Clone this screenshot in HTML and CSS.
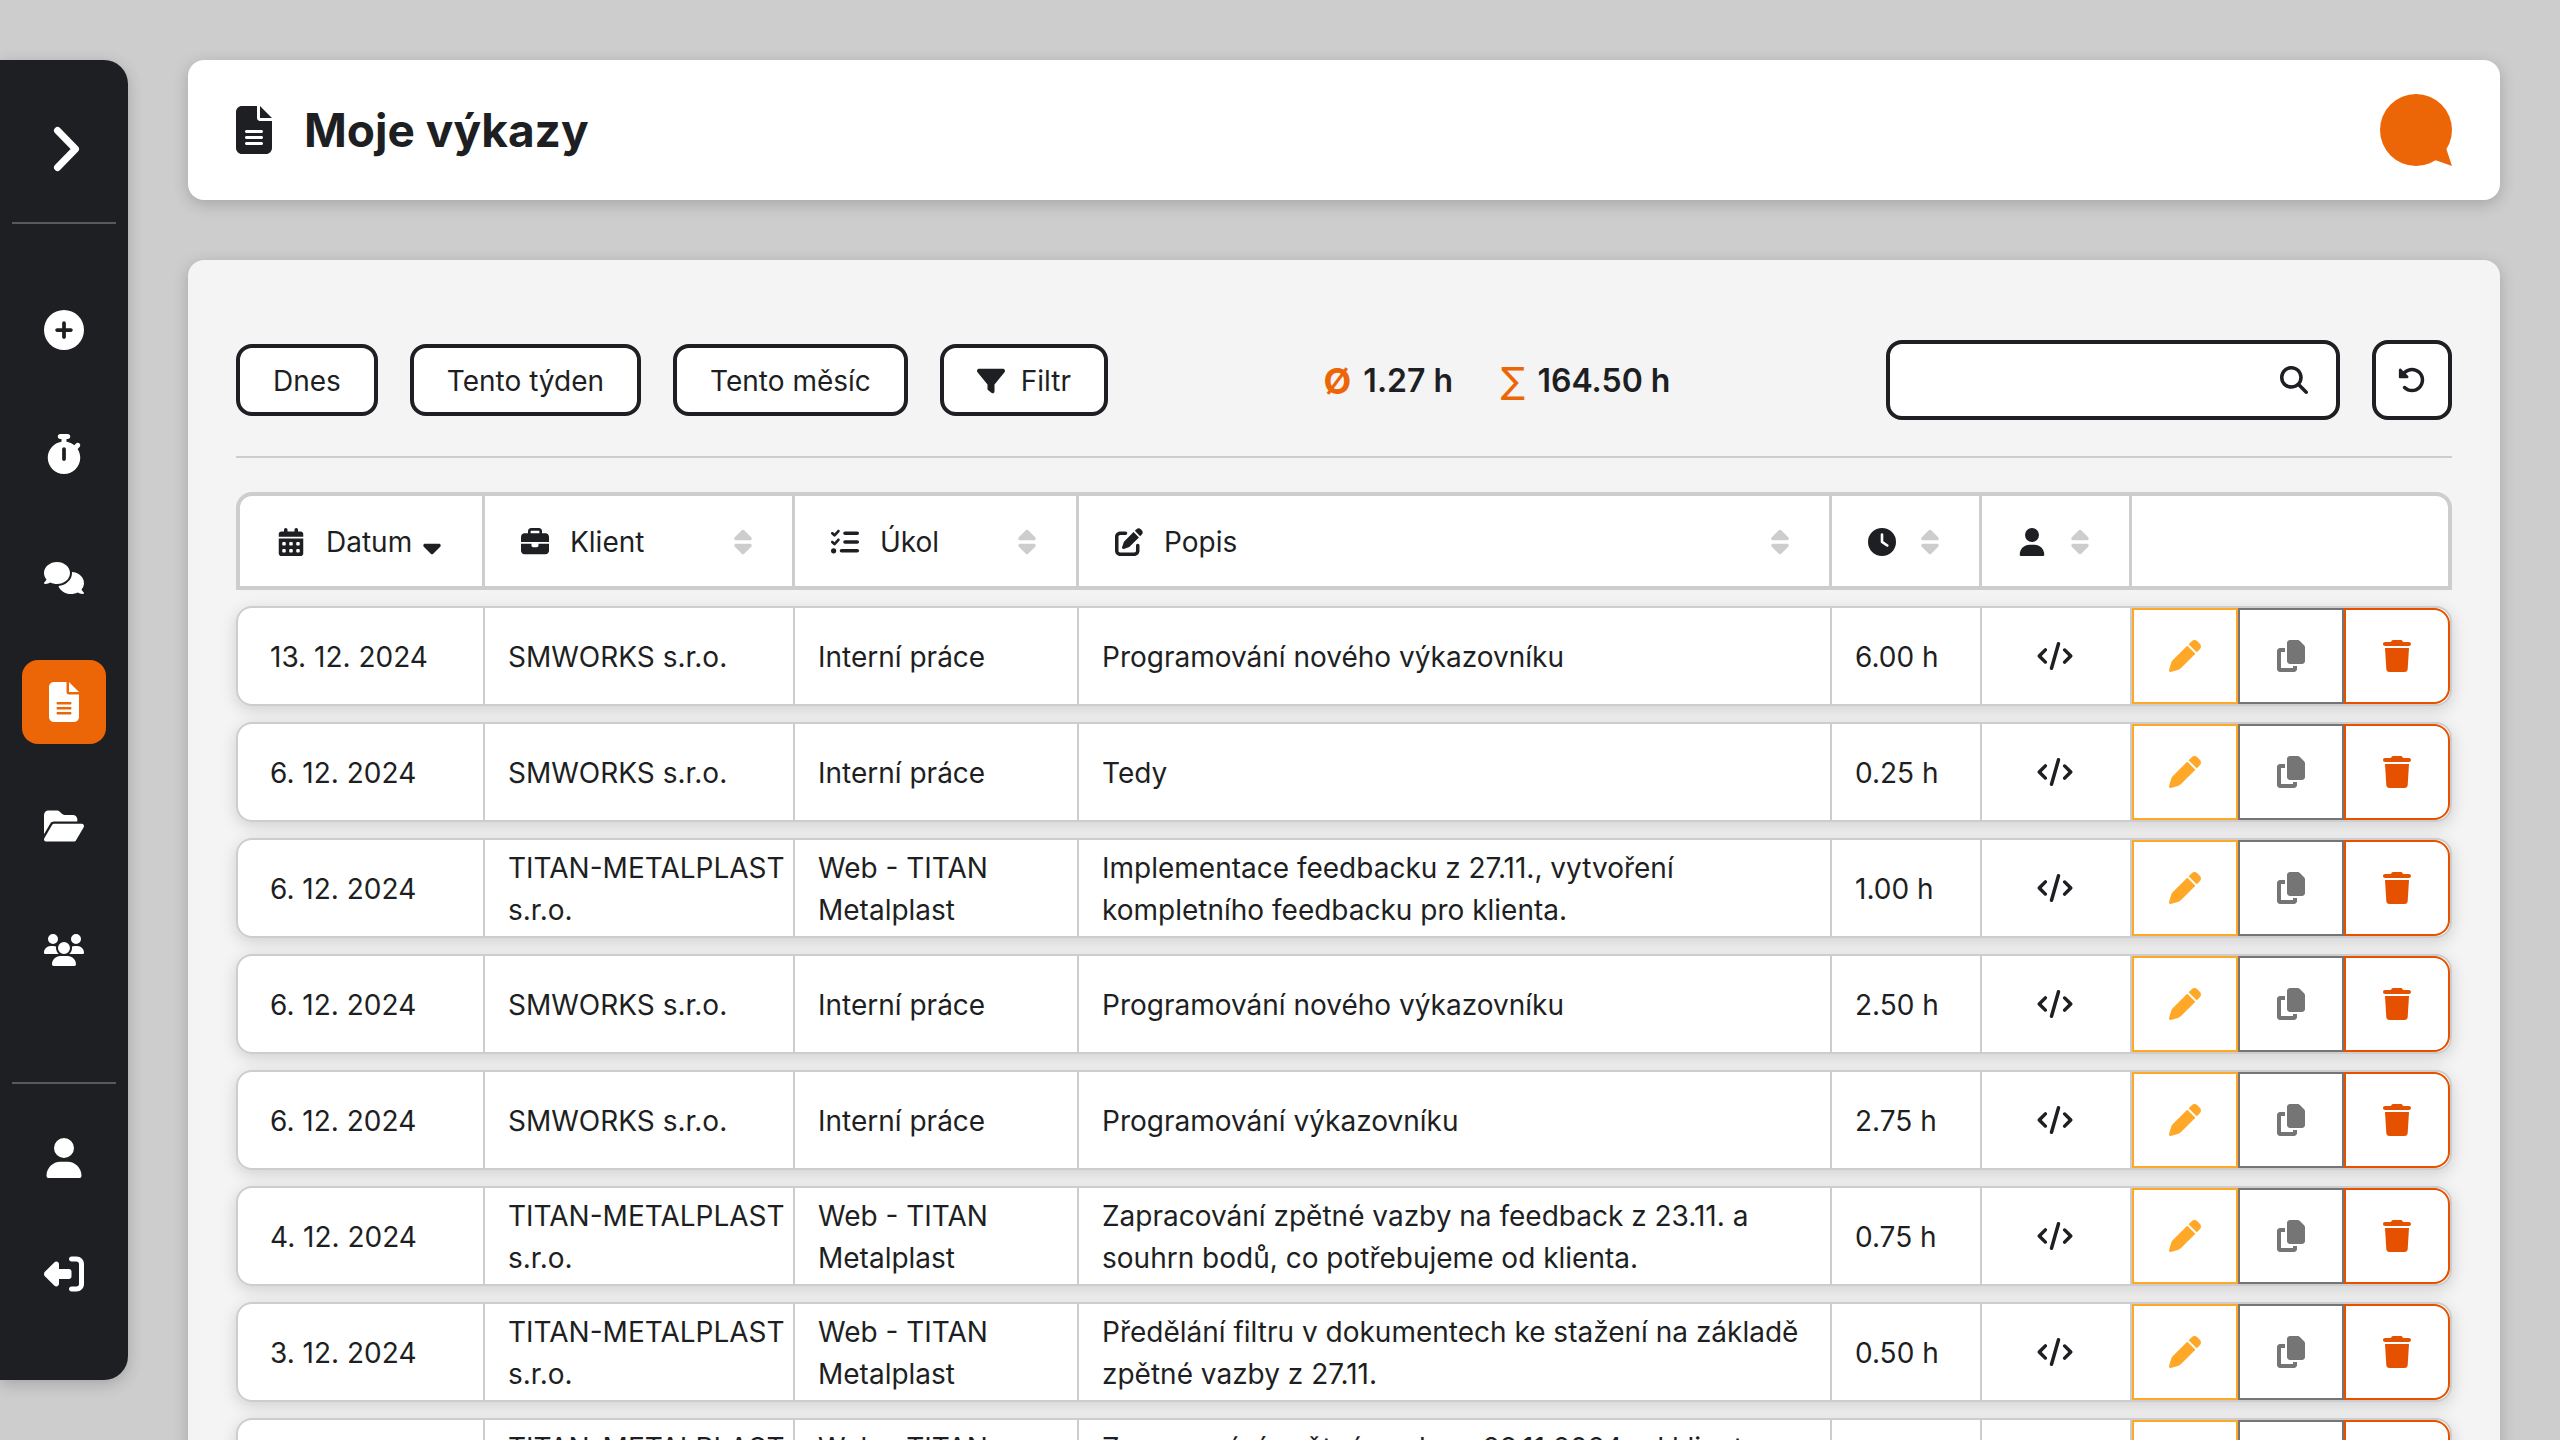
FILE: index.html
```html
<!DOCTYPE html>
<html lang="cs">
<head>
<meta charset="utf-8">
<title>Moje výkazy</title>
<meta name="viewport" content="width=device-width, initial-scale=1">
<link rel="stylesheet" href="styles.css">
</head>
<body>
<svg class="sprite" aria-hidden="true">
  <symbol id="chevron" viewBox="0 0 28 48"><path d="M4.500 5.500L22.500 24L4.500 42.500" fill="none" stroke="currentColor" stroke-width="7" stroke-linecap="round" stroke-linejoin="round"/></symbol>
  <symbol id="plus" viewBox="0 0 512 512"><path d="M256 512A256 256 0 1 0 256 0a256 256 0 1 0 0 512zM232 344l0-64-64 0c-13.300 0-24-10.700-24-24s10.700-24 24-24l64 0 0-64c0-13.300 10.700-24 24-24s24 10.700 24 24l0 64 64 0c13.300 0 24 10.700 24 24s-10.700 24-24 24l-64 0 0 64c0 13.300-10.700 24-24 24s-24-10.700-24-24z"/></symbol>
  <symbol id="stopwatch" viewBox="0 0 448 512"><path d="M176 0c-17.700 0-32 14.300-32 32s14.300 32 32 32l16 0 0 34.400C92.300 113.800 16 200 16 304c0 114.900 93.100 208 208 208s208-93.100 208-208c0-41.800-12.300-80.700-33.500-113.200l24.100-24.100c12.500-12.500 12.500-32.800 0-45.300s-32.800-12.500-45.300 0L355.700 143c-28.100-23-62.200-38.800-99.700-44.600L256 64l16 0c17.700 0 32-14.300 32-32s-14.300-32-32-32L224 0 176 0zm72 192l0 128c0 13.300-10.700 24-24 24s-24-10.700-24-24l0-128c0-13.300 10.700-24 24-24s24 10.700 24 24z"/></symbol>
  <symbol id="comments" viewBox="0 0 640 512"><path d="M208 352c114.900 0 208-78.800 208-176S322.900 0 208 0S0 78.800 0 176c0 38.600 14.700 74.300 39.600 103.400c-3.500 9.400-8.700 17.700-14.200 24.700c-4.800 6.200-9.700 11-13.300 14.300c-1.800 1.600-3.300 2.900-4.300 3.700c-.5 .4-.9 .7-1.100 .8l-.2 .2C1 327.200-1.400 334.400 .8 340.900S9.100 352 16 352c21.800 0 43.800-5.600 62.100-12.500c9.200-3.500 17.800-7.400 25.200-11.400C134.100 343.300 169.800 352 208 352zM448 176c0 112.300-99.100 196.900-216.500 207C255.800 457.400 336.400 512 432 512c38.200 0 73.900-8.700 104.700-23.900c7.500 4 16 7.900 25.200 11.400c18.300 6.900 40.300 12.500 62.100 12.500c6.900 0 13.100-4.500 15.200-11.100c2.100-6.600-.2-13.800-5.800-17.900l-.2-.2c-.2-.2-.6-.4-1.100-.8c-1-.8-2.500-2-4.300-3.700c-3.600-3.300-8.500-8.100-13.300-14.300c-5.500-7-10.700-15.400-14.200-24.700c24.900-29 39.600-64.700 39.600-103.400c0-92.800-84.900-168.900-192.600-175.500c.4 5.100 .6 10.300 .6 15.500z"/></symbol>
  <symbol id="file" viewBox="0 0 384 512"><path d="M64 0C28.700 0 0 28.700 0 64L0 448c0 35.300 28.700 64 64 64l256 0c35.300 0 64-28.700 64-64l0-288-128 0c-17.700 0-32-14.300-32-32L224 0 64 0zM256 0l0 128 128 0L256 0zM112 256l160 0c8.800 0 16 7.200 16 16s-7.200 16-16 16l-160 0c-8.800 0-16-7.200-16-16s7.200-16 16-16zm0 64l160 0c8.800 0 16 7.200 16 16s-7.200 16-16 16l-160 0c-8.800 0-16-7.200-16-16s7.200-16 16-16zm0 64l160 0c8.800 0 16 7.200 16 16s-7.200 16-16 16l-160 0c-8.800 0-16-7.200-16-16s7.200-16 16-16z"/></symbol>
  <symbol id="folder" viewBox="0 0 576 512"><path d="M88.700 223.800L0 375.800 0 96C0 60.700 28.700 32 64 32l117.500 0c17 0 33.300 6.700 45.300 18.700l26.500 26.500c12 12 28.300 18.700 45.300 18.700L416 96c35.300 0 64 28.700 64 64l0 32-336 0c-22.800 0-43.800 12.100-55.300 31.800zm27.600 16.100C122.100 230 132.600 224 144 224l400 0c11.500 0 22 6.100 27.700 16.100s5.700 22.200-.1 32.100l-112 192C453.900 474 443.400 480 432 480L32 480c-11.500 0-22-6.100-27.700-16.100s-5.700-22.200 .1-32.100l112-192z"/></symbol>
  <symbol id="users" viewBox="0 0 640 512"><path d="M144 0a80 80 0 1 1 0 160A80 80 0 1 1 144 0zM512 0a80 80 0 1 1 0 160A80 80 0 1 1 512 0zM0 298.700C0 239.800 47.800 192 106.700 192l42.700 0c15.900 0 31 3.500 44.600 9.700c-1.300 7.200-1.900 14.700-1.900 22.300c0 38.200 16.800 72.500 43.300 96L21.300 320C9.600 320 0 310.400 0 298.700zM405.300 320c26.600-23.500 43.300-57.800 43.300-96c0-7.600-.7-15-1.900-22.300c13.600-6.300 28.700-9.700 44.600-9.700l42.700 0C592.200 192 640 239.800 640 298.700c0 11.800-9.600 21.300-21.300 21.300l-213.300 0zM224 224a96 96 0 1 1 192 0 96 96 0 1 1 -192 0zM128 485.300C128 411.700 187.700 352 261.300 352l117.300 0C452.300 352 512 411.700 512 485.300c0 14.700-11.900 26.700-26.700 26.700l-330.700 0c-14.700 0-26.700-11.900-26.700-26.700z"/></symbol>
  <symbol id="user" viewBox="0 0 448 512"><path d="M224 256A128 128 0 1 0 224 0a128 128 0 1 0 0 256zm-45.700 48C79.800 304 0 383.800 0 482.300C0 498.700 13.300 512 29.700 512l388.600 0c16.400 0 29.700-13.300 29.700-29.700C448 383.800 368.200 304 269.700 304l-91.400 0z"/></symbol>
  <symbol id="logout" viewBox="0 0 512 512"><path transform="matrix(-1 0 0 1 512 0)" d="M377.900 105.900L500.700 228.700c7.200 7.200 11.300 17.100 11.300 27.300s-4.100 20.100-11.300 27.300L377.900 406.100c-6.400 6.400-15 9.900-24 9.900c-18.700 0-33.900-15.200-33.900-33.900l0-62.100-128 0c-17.700 0-32-14.300-32-32l0-64c0-17.700 14.300-32 32-32l128 0 0-62.100c0-18.700 15.200-33.900 33.900-33.900c9 0 17.600 3.600 24 9.900zM160 96L96 96c-17.700 0-32 14.300-32 32l0 256c0 17.700 14.300 32 32 32l64 0c17.700 0 32 14.300 32 32s-14.300 32-32 32l-64 0c-53 0-96-43-96-96L0 128C0 75 43 32 96 32l64 0c17.700 0 32 14.300 32 32s-14.300 32-32 32z"/></symbol>
  <symbol id="filter" viewBox="0 0 512 512"><path d="M3.900 54.900C10.500 40.900 24.500 32 40 32l432 0c15.500 0 29.500 8.900 36.100 22.900s4.600 30.500-5.200 42.500L320 320.900 320 448c0 12.100-6.800 23.200-17.700 28.600s-23.800 4.300-33.500-3l-64-48c-8.100-6-12.800-15.500-12.800-25.600l0-79.100L9 97.300C-.7 85.400-2.800 68.800 3.900 54.900z"/></symbol>
  <symbol id="calendar" viewBox="0 0 448 512"><path fill-rule="evenodd" d="M128 0c17.700 0 32 14.300 32 32l0 32 128 0 0-32c0-17.700 14.300-32 32-32s32 14.300 32 32l0 32 48 0c26.500 0 48 21.500 48 48l0 48L0 160l0-48C0 85.500 21.500 64 48 64l48 0 0-32c0-17.700 14.300-32 32-32zM0 192l448 0 0 272c0 26.500-21.500 48-48 48L48 512c-26.500 0-48-21.500-48-48L0 192zM64 272v32c0 8.800 7.200 16 16 16h32c8.800 0 16-7.200 16-16v-32c0-8.800-7.200-16-16-16h-32c-8.800 0-16 7.200-16 16zM192 272v32c0 8.800 7.200 16 16 16h32c8.800 0 16-7.200 16-16v-32c0-8.800-7.200-16-16-16h-32c-8.800 0-16 7.200-16 16zM320 272v32c0 8.800 7.200 16 16 16h32c8.800 0 16-7.200 16-16v-32c0-8.800-7.200-16-16-16h-32c-8.800 0-16 7.200-16 16zM64 400v32c0 8.800 7.200 16 16 16h32c8.800 0 16-7.200 16-16v-32c0-8.800-7.200-16-16-16h-32c-8.800 0-16 7.200-16 16zM192 400v32c0 8.800 7.200 16 16 16h32c8.800 0 16-7.200 16-16v-32c0-8.800-7.200-16-16-16h-32c-8.800 0-16 7.200-16 16zM320 400v32c0 8.800 7.200 16 16 16h32c8.800 0 16-7.200 16-16v-32c0-8.800-7.200-16-16-16h-32c-8.800 0-16 7.200-16 16z"/></symbol>
  <symbol id="briefcase" viewBox="0 0 512 512"><path d="M184 48l144 0c4.400 0 8 3.600 8 8l0 40L176 96l0-40c0-4.400 3.600-8 8-8zm-56 8l0 40L64 96C28.700 96 0 124.700 0 160l0 96 192 0 128 0 192 0 0-96c0-35.300-28.700-64-64-64l-64 0 0-40c0-30.900-25.100-56-56-56L184 0c-30.900 0-56 25.100-56 56zM512 288l-192 0 0 32c0 17.700-14.300 32-32 32l-64 0c-17.700 0-32-14.300-32-32l0-32L0 288 0 416c0 35.300 28.700 64 64 64l384 0c35.300 0 64-28.700 64-64l0-128z"/></symbol>
  <symbol id="tasks" viewBox="0 0 512 512"><path d="M152.100 38.200c9.900 8.900 10.700 24 1.800 33.900l-72 80c-4.400 4.900-10.600 7.800-17.200 7.900s-12.900-2.400-17.600-7L7 113C-2.300 103.600-2.300 88.400 7 79s24.600-9.400 33.900 0l22.100 22.100 55.100-61.200c8.900-9.900 24-10.700 33.900-1.800zm0 160c9.900 8.900 10.700 24 1.800 33.900l-72 80c-4.400 4.900-10.600 7.800-17.200 7.900s-12.900-2.400-17.600-7L7 273c-9.400-9.400-9.400-24.600 0-33.900s24.600-9.400 33.900 0l22.100 22.100 55.100-61.200c8.900-9.900 24-10.700 33.900-1.800zM224 96c0-17.700 14.300-32 32-32l224 0c17.700 0 32 14.300 32 32s-14.300 32-32 32l-224 0c-17.700 0-32-14.300-32-32zm0 160c0-17.700 14.300-32 32-32l224 0c17.700 0 32 14.300 32 32s-14.300 32-32 32l-224 0c-17.700 0-32-14.300-32-32zM160 416c0-17.700 14.300-32 32-32l288 0c17.700 0 32 14.300 32 32s-14.300 32-32 32l-288 0c-17.700 0-32-14.300-32-32zM48 368a48 48 0 1 1 0 96 48 48 0 1 1 0-96z"/></symbol>
  <symbol id="edit" viewBox="0 0 512 512"><path d="M471.600 21.700c-21.900-21.900-57.300-21.900-79.200 0L362.300 51.700l97.900 97.900 30.100-30.100c21.900-21.900 21.900-57.300 0-79.200L471.600 21.700zm-299.200 220c-6.100 6.100-10.800 13.600-13.500 21.900l-29.600 88.800c-2.900 8.600-.6 18.100 5.800 24.600s15.900 8.700 24.600 5.800l88.800-29.600c8.200-2.700 15.700-7.400 21.900-13.500L437.700 172.300 339.700 74.300 172.400 241.700zM96 64C43 64 0 107 0 160L0 416c0 53 43 96 96 96l256 0c53 0 96-43 96-96l0-96c0-17.700-14.300-32-32-32s-32 14.300-32 32l0 96c0 17.700-14.300 32-32 32L96 448c-17.700 0-32-14.300-32-32l0-256c0-17.700 14.300-32 32-32l96 0c17.700 0 32-14.300 32-32s-14.300-32-32-32L96 64z"/></symbol>
  <symbol id="clock" viewBox="0 0 512 512"><path d="M256 0a256 256 0 1 1 0 512A256 256 0 1 1 256 0zM232 120l0 136c0 8 4 15.500 10.700 20l96 64c11 7.400 25.900 4.400 33.300-6.700s4.400-25.900-6.700-33.300L280 243.200 280 120c0-13.300-10.700-24-24-24s-24 10.700-24 24z"/></symbol>
  <symbol id="sort" viewBox="0 0 320 512"><path d="M137.400 41.400c12.500-12.500 32.800-12.500 45.300 0l128 128c9.200 9.200 11.900 22.900 6.900 34.900s-16.600 19.800-29.600 19.800L32 224c-12.900 0-24.600-7.800-29.600-19.800s-2.200-25.700 6.900-34.900l128-128zm0 429.300l-128-128c-9.200-9.200-11.900-22.900-6.900-34.900s16.600-19.800 29.600-19.800l256 0c12.900 0 24.600 7.800 29.600 19.800s2.200 25.700-6.900 34.900l-128 128c-12.500 12.500-32.800 12.500-45.300 0z"/></symbol>
  <symbol id="sort-down" viewBox="0 0 320 512"><path d="M137.400 470.700l-128-128c-9.200-9.200-11.900-22.900-6.900-34.900s16.600-19.800 29.600-19.800l256 0c12.900 0 24.600 7.800 29.600 19.800s2.200 25.700-6.900 34.900l-128 128c-12.500 12.500-32.800 12.500-45.300 0z"/></symbol>
  <symbol id="code" viewBox="0 0 640 512"><path d="M392.800 1.200c-17-4.900-34.700 5-39.600 22l-128 448c-4.900 17 5 34.700 22 39.600s34.700-5 39.600-22l128-448c4.900-17-5-34.700-22-39.600zm80.600 120.100c-12.500 12.500-12.500 32.800 0 45.300L562.700 256l-89.400 89.400c-12.500 12.500-12.500 32.800 0 45.300s32.800 12.500 45.300 0l112-112c12.500-12.500 12.500-32.800 0-45.300l-112-112c-12.500-12.500-32.800-12.500-45.300 0zm-306.700 0c-12.500-12.500-32.800-12.500-45.300 0l-112 112c-12.500 12.500-12.500 32.800 0 45.300l112 112c12.500 12.500 32.800 12.500 45.300 0s12.500-32.800 0-45.300L77.300 256l89.400-89.400c12.500-12.500 12.500-32.800 0-45.300z"/></symbol>
  <symbol id="pen" viewBox="0 0 512 512"><path d="M362.700 19.300L314.300 67.700 444.300 197.700l48.400-48.400c25-25 25-65.500 0-90.500L453.300 19.300c-25-25-65.500-25-90.500 0zm-71 71L58.600 323.500c-10.400 10.400-18 23.300-22.200 37.400L1 481.200C-1.500 489.700 .8 498.800 7 505s15.300 8.500 23.700 6.100l120.300-35.400c14.100-4.200 27-11.800 37.400-22.200L421.700 220.300 291.700 90.300z"/></symbol>
  <symbol id="copy" viewBox="0 0 448 512"><path d="M208 0L332.100 0c12.700 0 24.900 5.100 33.900 14.100l67.900 67.900c9 9 14.100 21.200 14.100 33.900L448 336c0 26.500-21.500 48-48 48l-192 0c-26.500 0-48-21.500-48-48l0-288c0-26.500 21.500-48 48-48zM48 128l80 0 0 64-64 0 0 256 192 0 0-32 64 0 0 48c0 26.500-21.500 48-48 48L48 512c-26.500 0-48-21.500-48-48L0 176c0-26.500 21.500-48 48-48z"/></symbol>
  <symbol id="trash" viewBox="0 0 448 512"><path d="M135.200 17.700L128 32 32 32C14.300 32 0 46.300 0 64S14.300 96 32 96l384 0c17.700 0 32-14.300 32-32s-14.300-32-32-32l-96 0-7.200-14.300C307.400 6.800 296.300 0 284.200 0L163.800 0c-12.100 0-23.200 6.800-28.600 17.700zM416 128L32 128 53.200 467c1.600 25.300 22.600 45 47.900 45l245.800 0c25.300 0 46.300-19.700 47.900-45L416 128z"/></symbol>
  <symbol id="search" viewBox="0 0 512 512"><path d="M416 208c0 45.900-14.900 88.300-40 122.700L502.600 457.400c12.500 12.500 12.500 32.800 0 45.300s-32.800 12.500-45.300 0L330.700 376c-34.400 25.200-76.800 40-122.700 40C93.100 416 0 322.900 0 208S93.100 0 208 0S416 93.100 416 208zM208 352a144 144 0 1 0 0-288 144 144 0 1 0 0 288z"/></symbol>
  <symbol id="reset" viewBox="0 0 512 512"><path d="M48.500 224L40 224c-13.300 0-24-10.700-24-24L16 72c0-9.700 5.800-18.500 14.800-22.200s19.300-1.700 26.200 5.200L98.600 96.600c87.600-86.500 228.700-86.200 315.800 1c87.500 87.500 87.500 229.300 0 316.800s-229.300 87.500-316.800 0c-12.500-12.500-12.500-32.800 0-45.300s32.800-12.500 45.300 0c62.500 62.500 163.800 62.500 226.300 0s62.500-163.800 0-226.300c-62.200-62.200-162.700-62.500-225.300-1L185 183c6.900 6.900 8.900 17.200 5.200 26.200s-12.500 14.800-22.200 14.800L48.500 224z"/></symbol>
</svg>

<div class="app">
  <aside class="sidebar">
    <button class="side-item" type="button" aria-label="Rozbalit menu"><svg class="icon-toggle"><use href="#chevron"/></svg></button>
    <hr class="side-rule side-rule-top">
    <nav class="side-nav" aria-label="Hlavní menu">
      <a class="side-item" href="#pridat" aria-label="Přidat"><svg class="icon-side"><use href="#plus"/></svg></a>
      <a class="side-item" href="#stopky" aria-label="Stopky"><svg class="icon-side"><use href="#stopwatch"/></svg></a>
      <a class="side-item" href="#zpravy" aria-label="Zprávy"><svg class="icon-side"><use href="#comments"/></svg></a>
      <a class="side-item side-item-active" href="#vykazy" aria-label="Moje výkazy" aria-current="page"><svg class="icon-side"><use href="#file"/></svg></a>
      <a class="side-item" href="#projekty" aria-label="Projekty"><svg class="icon-side"><use href="#folder"/></svg></a>
      <a class="side-item" href="#tym" aria-label="Tým"><svg class="icon-side"><use href="#users"/></svg></a>
    </nav>
    <hr class="side-rule side-rule-bottom">
    <div class="side-account">
      <a class="side-item" href="#profil" aria-label="Profil"><svg class="icon-side"><use href="#user"/></svg></a>
      <button class="side-item" type="button" aria-label="Odhlásit"><svg class="icon-side"><use href="#logout"/></svg></button>
    </div>
  </aside>

  <main class="main">
    <header class="card header">
      <svg class="icon-title"><use href="#file"/></svg>
      <h1 class="title">Moje výkazy</h1>
      <svg class="logo" viewBox="0 0 72 72" aria-hidden="true"><circle cx="36" cy="36" r="36"/><path d="M54 62L66 54L72 72L55 66z"/></svg>
    </header>

    <section class="card panel">
      <div class="toolbar">
        <div class="filters">
          <button class="btn" type="button">Dnes</button>
          <button class="btn" type="button">Tento týden</button>
          <button class="btn" type="button">Tento měsíc</button>
          <button class="btn" type="button"><svg class="icon"><use href="#filter"/></svg>Filtr</button>
        </div>
        <div class="stats">
          <div class="stat"><span class="stat-sign">Ø</span>1.27 h</div>
          <div class="stat"><span class="stat-sign stat-sum">∑</span>164.50 h</div>
        </div>
        <div class="tools">
          <div class="search">
            <input class="search-input" type="text" aria-label="Hledat">
            <svg class="icon"><use href="#search"/></svg>
          </div>
          <button class="btn btn-square" type="button" aria-label="Obnovit"><svg class="icon"><use href="#reset"/></svg></button>
        </div>
      </div>

      <table class="table">
        <colgroup><col class="col-date"><col class="col-client"><col class="col-task"><col><col class="col-hours"><col class="col-type"><col class="col-actions"></colgroup>
        <thead>
          <tr>
            <th><div class="th"><svg class="icon-th"><use href="#calendar"/></svg>Datum<svg class="icon-sorted"><use href="#sort-down"/></svg></div></th>
            <th><div class="th"><svg class="icon-th"><use href="#briefcase"/></svg>Klient<svg class="icon-sort"><use href="#sort"/></svg></div></th>
            <th><div class="th"><svg class="icon-th"><use href="#tasks"/></svg>Úkol<svg class="icon-sort"><use href="#sort"/></svg></div></th>
            <th><div class="th"><svg class="icon-th"><use href="#edit"/></svg>Popis<svg class="icon-sort"><use href="#sort"/></svg></div></th>
            <th aria-label="Čas"><div class="th"><svg class="icon-th"><use href="#clock"/></svg><svg class="icon-sort"><use href="#sort"/></svg></div></th>
            <th aria-label="Role"><div class="th"><svg class="icon-th"><use href="#user"/></svg><svg class="icon-sort"><use href="#sort"/></svg></div></th>
            <th aria-label="Akce"></th>
          </tr>
        </thead>
        <tbody>
          <tr>
            <td>13. 12. 2024</td><td class="client">SMWORKS s.r.o.</td><td>Interní práce</td><td>Programování nového výkazovníku</td><td>6.00 h</td>
            <td class="type"><svg class="icon-code"><use href="#code"/></svg></td>
            <td class="actions"><div class="action-group"><button class="action action-edit" type="button" aria-label="Upravit"><svg class="icon-action"><use href="#pen"/></svg></button><button class="action action-copy" type="button" aria-label="Kopírovat"><svg class="icon-action"><use href="#copy"/></svg></button><button class="action action-delete" type="button" aria-label="Smazat"><svg class="icon-action"><use href="#trash"/></svg></button></div></td>
          </tr>
          <tr>
            <td>6. 12. 2024</td><td class="client">SMWORKS s.r.o.</td><td>Interní práce</td><td>Tedy</td><td>0.25 h</td>
            <td class="type"><svg class="icon-code"><use href="#code"/></svg></td>
            <td class="actions"><div class="action-group"><button class="action action-edit" type="button" aria-label="Upravit"><svg class="icon-action"><use href="#pen"/></svg></button><button class="action action-copy" type="button" aria-label="Kopírovat"><svg class="icon-action"><use href="#copy"/></svg></button><button class="action action-delete" type="button" aria-label="Smazat"><svg class="icon-action"><use href="#trash"/></svg></button></div></td>
          </tr>
          <tr>
            <td>6. 12. 2024</td><td class="client">TITAN-METALPLAST s.r.o.</td><td>Web - TITAN Metalplast</td><td>Implementace feedbacku z 27.11., vytvoření kompletního feedbacku pro klienta.</td><td>1.00 h</td>
            <td class="type"><svg class="icon-code"><use href="#code"/></svg></td>
            <td class="actions"><div class="action-group"><button class="action action-edit" type="button" aria-label="Upravit"><svg class="icon-action"><use href="#pen"/></svg></button><button class="action action-copy" type="button" aria-label="Kopírovat"><svg class="icon-action"><use href="#copy"/></svg></button><button class="action action-delete" type="button" aria-label="Smazat"><svg class="icon-action"><use href="#trash"/></svg></button></div></td>
          </tr>
          <tr>
            <td>6. 12. 2024</td><td class="client">SMWORKS s.r.o.</td><td>Interní práce</td><td>Programování nového výkazovníku</td><td>2.50 h</td>
            <td class="type"><svg class="icon-code"><use href="#code"/></svg></td>
            <td class="actions"><div class="action-group"><button class="action action-edit" type="button" aria-label="Upravit"><svg class="icon-action"><use href="#pen"/></svg></button><button class="action action-copy" type="button" aria-label="Kopírovat"><svg class="icon-action"><use href="#copy"/></svg></button><button class="action action-delete" type="button" aria-label="Smazat"><svg class="icon-action"><use href="#trash"/></svg></button></div></td>
          </tr>
          <tr>
            <td>6. 12. 2024</td><td class="client">SMWORKS s.r.o.</td><td>Interní práce</td><td>Programování výkazovníku</td><td>2.75 h</td>
            <td class="type"><svg class="icon-code"><use href="#code"/></svg></td>
            <td class="actions"><div class="action-group"><button class="action action-edit" type="button" aria-label="Upravit"><svg class="icon-action"><use href="#pen"/></svg></button><button class="action action-copy" type="button" aria-label="Kopírovat"><svg class="icon-action"><use href="#copy"/></svg></button><button class="action action-delete" type="button" aria-label="Smazat"><svg class="icon-action"><use href="#trash"/></svg></button></div></td>
          </tr>
          <tr>
            <td>4. 12. 2024</td><td class="client">TITAN-METALPLAST s.r.o.</td><td>Web - TITAN Metalplast</td><td>Zapracování zpětné vazby na feedback z 23.11. a souhrn bodů, co potřebujeme od klienta.</td><td>0.75 h</td>
            <td class="type"><svg class="icon-code"><use href="#code"/></svg></td>
            <td class="actions"><div class="action-group"><button class="action action-edit" type="button" aria-label="Upravit"><svg class="icon-action"><use href="#pen"/></svg></button><button class="action action-copy" type="button" aria-label="Kopírovat"><svg class="icon-action"><use href="#copy"/></svg></button><button class="action action-delete" type="button" aria-label="Smazat"><svg class="icon-action"><use href="#trash"/></svg></button></div></td>
          </tr>
          <tr>
            <td>3. 12. 2024</td><td class="client">TITAN-METALPLAST s.r.o.</td><td>Web - TITAN Metalplast</td><td>Předělání filtru v dokumentech ke stažení na základě zpětné vazby z 27.11.</td><td>0.50 h</td>
            <td class="type"><svg class="icon-code"><use href="#code"/></svg></td>
            <td class="actions"><div class="action-group"><button class="action action-edit" type="button" aria-label="Upravit"><svg class="icon-action"><use href="#pen"/></svg></button><button class="action action-copy" type="button" aria-label="Kopírovat"><svg class="icon-action"><use href="#copy"/></svg></button><button class="action action-delete" type="button" aria-label="Smazat"><svg class="icon-action"><use href="#trash"/></svg></button></div></td>
          </tr>
          <tr>
            <td>3. 12. 2024</td><td class="client">TITAN-METALPLAST s.r.o.</td><td>Web - TITAN Metalplast</td><td>Zapracování zpětné vazby z 28.11.2024 od klienta zpracovaných do webu.</td><td>1.50 h</td>
            <td class="type"><svg class="icon-code"><use href="#code"/></svg></td>
            <td class="actions"><div class="action-group"><button class="action action-edit" type="button" aria-label="Upravit"><svg class="icon-action"><use href="#pen"/></svg></button><button class="action action-copy" type="button" aria-label="Kopírovat"><svg class="icon-action"><use href="#copy"/></svg></button><button class="action action-delete" type="button" aria-label="Smazat"><svg class="icon-action"><use href="#trash"/></svg></button></div></td>
          </tr>
        </tbody>
      </table>
    </section>
  </main>
</div>
</body>
</html>
```
FILE: styles.css
```css
:root {
  --dark: #1e1f23;
  --orange: #ec6608;
  --line: #cdcdcd;
  --shadow: 0 4px 16px rgba(0, 0, 0, 0.2);
}

* { box-sizing: border-box; }

body {
  margin: 0;
  background: #cdcdcd;
  color: var(--dark);
  font: 400 28px/42px Inter, "Noto Sans", sans-serif;
}

button, input { font: inherit; color: inherit; }
button { cursor: pointer; }
svg { fill: currentColor; flex: none; display: block; }
.sprite { display: none; }

.app { display: flex; height: 100vh; overflow: hidden; }

/* Sidebar */
.sidebar {
  z-index: 1;
  flex: none;
  display: flex;
  flex-direction: column;
  align-items: center;
  width: 128px;
  margin: 60px 0;
  padding: 47px 12px 64px;
  border-radius: 0 24px 24px 0;
  background: var(--dark);
  color: #fff;
  box-shadow: var(--shadow);
}
.side-item {
  display: flex;
  align-items: center;
  justify-content: center;
  width: 84px;
  height: 84px;
  padding: 0;
  border: 0;
  border-radius: 16px;
  background: none;
  color: #fff;
}
.side-item-active { background: var(--orange); }
.side-rule { width: 100%; height: 2px; margin: 0; border: 0; background: #58595c; }
.side-rule-top { margin: 31px 0 64px; }
.side-rule-bottom { margin: auto 0 32px; }
.side-nav { display: flex; flex-direction: column; gap: 40px; }
.side-account { display: flex; flex-direction: column; gap: 32px; }
.icon-side { width: 40px; height: 40px; }
.icon-toggle { width: 28px; height: 48px; margin-left: 6px; }

/* Page */
.main {
  flex: 1;
  min-width: 0;
  padding: 60px;
  overflow-y: auto;
  scrollbar-width: none;
}
.card { border-radius: 16px; box-shadow: var(--shadow); }
.header {
  display: flex;
  align-items: center;
  gap: 32px;
  height: 140px;
  padding: 0 48px;
  background: #fff;
}
.title { margin: 0; font-size: 46px; line-height: 60px; font-weight: 700; }
.icon-title { width: 36px; height: 48px; }
.logo { width: 72px; height: 72px; margin-left: auto; color: var(--orange); }

.panel { margin-top: 60px; padding: 80px 48px 48px; background: #f4f4f4; }

/* Toolbar */
.toolbar {
  display: flex;
  align-items: center;
  justify-content: space-between;
  padding-bottom: 36px;
  border-bottom: 2px solid var(--line);
}
.filters, .tools { display: flex; align-items: center; gap: 32px; }
.btn {
  display: flex;
  align-items: center;
  justify-content: center;
  gap: 16px;
  height: 72px;
  padding: 2px 33px 0;
  border: 4px solid var(--dark);
  border-radius: 16px;
  background: #fff;
}
.btn-square { width: 80px; height: 80px; padding: 0; }
.icon { width: 28px; height: 28px; }
.stats { display: flex; gap: 48px; padding-top: 2px; font-size: 32px; font-weight: 600; }
.stat { display: flex; align-items: center; gap: 12px; }
.stat-sign { color: var(--orange); font-size: 36px; font-weight: 700; }
.stat-sum { font-family: "DejaVu Sans", sans-serif; font-weight: 400; }
.search {
  display: flex;
  align-items: center;
  width: 454px;
  height: 80px;
  padding-right: 28px;
  border: 4px solid var(--dark);
  border-radius: 16px;
  background: #fff;
}
.search-input { flex: 1; min-width: 0; height: 100%; padding: 0 28px; border: 0; outline: 0; background: none; }

/* Table */
.table {
  width: 100%;
  margin-top: 18px;
  table-layout: fixed;
  border-collapse: separate;
  border-spacing: 0 16px;
}
.col-date { width: 249px; }
.col-client { width: 310px; }
.col-task { width: 284px; }
.col-hours, .col-type { width: 150px; }
.col-actions { width: 320px; }

th {
  height: 98px;
  padding: 0;
  border: solid var(--line);
  border-width: 4px 3px 4px 0;
  background: #fff;
  font-weight: 400;
  text-align: left;
}
th:first-child { border-left-width: 4px; border-top-left-radius: 16px; }
th:last-child { border-right-width: 4px; border-top-right-radius: 16px; }
.th { display: flex; align-items: center; gap: 17px; padding: 2px 40px 0 32px; }
th:first-child .th { padding-left: 33px; }
.icon-th { width: 36px; height: 28px; }
.icon-sort { width: 18px; height: 28px; margin-left: auto; color: var(--line); }
.icon-sorted { width: 18px; height: 28px; margin-left: -6px; }

tbody tr { border-radius: 16px; box-shadow: 0 4px 16px rgba(0, 0, 0, 0.15); }
td {
  height: 100px;
  padding: 7px 23px 5px;
  border: solid var(--line);
  border-width: 2px 2px 2px 0;
  background: #fff;
}
td:first-child { padding-left: 32px; border-left-width: 2px; border-radius: 16px 0 0 16px; }
td:last-child { border-radius: 0 16px 16px 0; }
td.client { padding-right: 0; }
td.type { padding: 0 2px 0 0; }
td.actions { padding: 0; }
.icon-code { width: 36px; height: 28px; margin: 0 auto; }
.action-group { display: flex; }
.action {
  flex: 1;
  display: flex;
  align-items: center;
  justify-content: center;
  height: 96px;
  padding: 0;
  border: 2px solid currentColor;
  background: #fff;
}
.action-edit { color: #ffa726; }
.action-copy { color: #757575; }
.action-delete { color: #e65100; border-radius: 0 16px 16px 0; }
.icon-action { width: 32px; height: 32px; }
```
